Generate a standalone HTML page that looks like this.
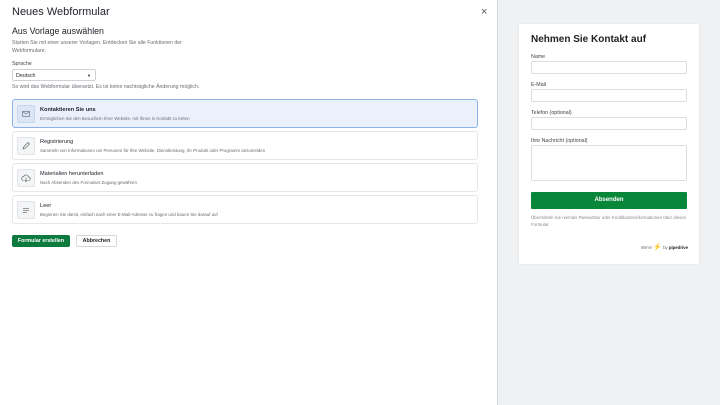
<!DOCTYPE html>
<html><head><style>
*{box-sizing:border-box;margin:0;padding:0}
body{width:720px;height:405px;overflow:hidden;font-family:"Liberation Sans",sans-serif;background:#fff;position:relative;color:#21232c}
.left{position:absolute;left:0;top:0;width:498px;height:405px;background:#fff;border-right:1px solid #d5d7db}
.right{position:absolute;left:498px;top:0;width:222px;height:405px;background:#f0f1f2}
.a{position:absolute;white-space:nowrap}
.item{position:absolute;left:12px;width:466px;height:29px;border:1px solid #e6e7ea;border-radius:3px;background:#fff}
.item.sel{background:#eaf1fb;border-color:#8fb2e6}
.ic{position:absolute;left:4px;top:5px;width:18px;height:18px;background:#f4f5f6;border:1px solid #e3e4e7;border-radius:2px}
.sel .ic{background:#dbe6f5;border-color:#c7d7ee}
.t{position:absolute;left:27px;top:7px;font-size:5.6px;font-weight:bold;color:#21232c}
.d{position:absolute;left:27px;top:15.5px;font-size:4.4px;color:#6a6d75}
.card{position:absolute;left:519px;top:24px;width:180px;height:240px;background:#fff;border-radius:2px;box-shadow:0 0 2px rgba(0,0,0,.08)}
.lab{position:absolute;left:12px;font-size:5.3px;color:#444}
.inp{position:absolute;left:12px;width:156px;height:13px;border:1px solid #dcdde0;border-radius:2px}
</style></head><body>
<div class="left">
<div class="a" style="left:12px;top:6px;font-size:11px;color:#21232c">Neues Webformular</div>
<div class="a" style="left:481px;top:6px;font-size:11px;color:#555">×</div>
<div class="a" style="left:12px;top:26px;font-size:8.8px">Aus Vorlage auswählen</div>
<div class="a" style="left:12px;top:40px;font-size:5.2px;color:#6a6d75;line-height:7.5px;white-space:normal;width:192px">Starten Sie mit einer unserer Vorlagen. Entdecken Sie alle Funktionen der Webformulare.</div>
<div class="a" style="left:12px;top:61px;font-size:5.3px;color:#444">Sprache</div>
<div class="a" style="left:12px;top:69px;width:84px;height:12px;border:1px solid #cfd1d5;border-radius:2px;font-size:5.3px;padding:3px 0 0 3px">Deutsch<span style="position:absolute;right:4px;top:3px;font-size:4px">▼</span></div>
<div class="a" style="left:12px;top:84px;font-size:5.2px;color:#6a6d75">So wird das Webformular übersetzt. Es ist keine nachträgliche Änderung möglich.</div>
<div class="item sel" style="top:99px"><div class="ic"><svg width="16" height="16" viewBox="0 0 16 16"><rect x="4.5" y="5.5" width="7" height="5" fill="none" stroke="#6a7486" stroke-width=".7"/><path d="M4.5 5.5l3.5 2.5 3.5-2.5" fill="none" stroke="#6a7486" stroke-width=".7"/></svg></div><div class="t">Kontaktieren Sie uns</div><div class="d">Ermöglichen Sie den Besuchern Ihrer Website, mit Ihnen in Kontakt zu treten</div></div>
<div class="item" style="top:131px"><div class="ic"><svg width="16" height="16" viewBox="0 0 16 16"><path d="M5 11l1-2.5 4-4 1.5 1.5-4 4z" fill="none" stroke="#666" stroke-width=".7"/></svg></div><div class="t" style="font-weight:normal">Registrierung</div><div class="d">Sammeln von Informationen um Personen für Ihre Website, Dienstleistung, Ihr Produkt oder Programm anzumelden</div></div>
<div class="item" style="top:163px"><div class="ic"><svg width="16" height="16" viewBox="0 0 16 16"><path d="M5.5 10.5a2 2 0 0 1 .3-4 2.4 2.4 0 0 1 4.6.4 1.8 1.8 0 0 1 0 3.6M8 7.5v4m-1.3-1.3L8 11.5l1.3-1.3" fill="none" stroke="#666" stroke-width=".7"/></svg></div><div class="t" style="font-weight:normal">Materialien herunterladen</div><div class="d">Nach Absenden des Formulars Zugang gewähren</div></div>
<div class="item" style="top:195px"><div class="ic"><svg width="16" height="16" viewBox="0 0 16 16"><path d="M5 6.5h6M5 8.5h6M5 10.5h4" stroke="#777" stroke-width=".7"/></svg></div><div class="t" style="font-weight:normal">Leer</div><div class="d">Beginnen Sie damit, einfach nach einer E-Mail-Adresse zu fragen und bauen Sie darauf auf</div></div>
<div class="a" style="left:12px;top:235px;width:58px;height:12px;background:#0d7a3e;border-radius:2px;color:#fff;font-size:5.3px;font-weight:bold;text-align:center;line-height:12px">Formular erstellen</div>
<div class="a" style="left:76px;top:235px;width:41px;height:12px;border:1px solid #d5d7db;border-radius:2px;font-size:5.3px;font-weight:bold;text-align:center;line-height:10px">Abbrechen</div>
</div>
<div class="right"></div>
<div class="card">
<div class="a" style="left:12px;top:10px;font-size:10px;font-weight:bold;color:#222">Nehmen Sie Kontakt auf</div>
<div class="lab" style="top:30px">Name</div><div class="inp" style="top:37px"></div>
<div class="lab" style="top:58px">E-Mail</div><div class="inp" style="top:65px"></div>
<div class="lab" style="top:86px">Telefon (optional)</div><div class="inp" style="top:93px"></div>
<div class="lab" style="top:114px">Ihre Nachricht (optional)</div><div class="inp" style="top:121px;height:36px"></div>
<div class="a" style="left:12px;top:168px;width:156px;height:17px;background:#08863a;border-radius:1px;color:#fff;font-size:6px;font-weight:bold;text-align:center;line-height:17px">Absenden</div>
<div class="a" style="left:12px;top:191px;width:160px;white-space:normal;font-size:4.4px;line-height:6.5px;color:#888">Übermitteln Sie niemals Passwörter oder Kreditkarteninformationen über dieses Formular.</div>
<div class="a" style="left:122px;top:219px;font-size:4.3px;color:#666">We're <span style="color:#f5b800;font-size:7px">⚡</span> by <b style="color:#222">pipedrive</b></div>
</div>
</body></html>
